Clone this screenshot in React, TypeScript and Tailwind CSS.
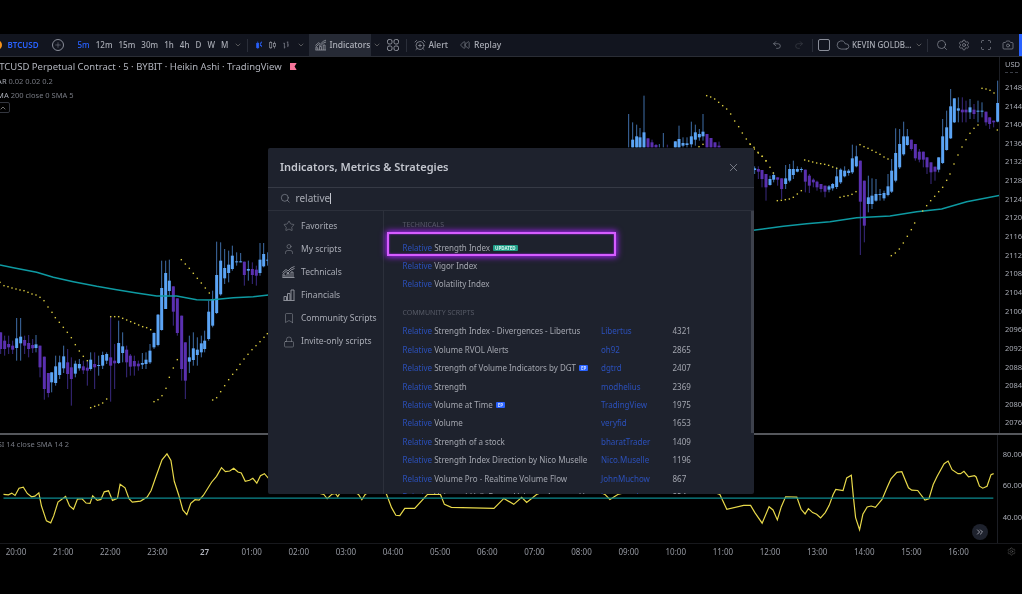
import React from "react";
import { AlarmClockPlus, Bookmark, Camera, ChevronDown, ChevronUp, ChevronsRight, Cloud, Lock, Plus, Redo2, Rewind, Scan, Search, Settings, Star, Undo2, User, X } from "lucide-react";

type C = [number, number, number, number, number, number];
// x, bodyTop, bodyBottom, wickTop, wickBottom, up(1)/down(0), crop coordinates
const leftC: C[] = [
[2,310,360,310,375,0],[14,335,360,320,380,0],[26,345,355,320,375,0],[38,350,362,335,375,0],[50,328,357,267,395,1],[62,323,343,267,395,1],[74,333,350,320,375,0],[86,342,360,318,385,0],[98,348,358,330,372,0],[108,346,357,318,370,1],[120,350,415,350,445,0],[133,383,480,383,512,0],[145,432,492,432,505,0],[155,430,460,430,490,1],[167,412,462,380,470,1],[179,400,438,380,450,1],[191,382,418,350,432,1],[203,400,435,360,480,0],[214,415,450,385,530,0],[226,404,434,395,445,1],[238,405,418,390,425,1],[250,412,424,395,435,0],[262,416,425,395,470,0],[272,392,420,370,425,1],[284,405,415,370,480,0],[296,408,411,380,440,1],[308,378,410,368,420,1],[320,375,395,370,405,1],[332,385,410,262,518,0],[344,395,403,345,480,0],[356,342,402,275,405,1],[368,352,372,310,400,1],[380,362,400,350,445,0],[391,380,413,375,440,0],[403,396,412,380,440,0],[415,404,412,395,425,0],[427,402,407,372,420,1],[438,392,405,370,420,1],[450,365,400,345,405,1],[462,312,355,310,360,1],[474,257,348,255,352,1],[485,177,303,95,305,1],[497,132,240,95,240,1],[508,155,186,92,200,1],[520,172,248,172,290,0],[532,208,312,208,320,0],[545,260,420,260,455,0],[556,340,455,340,510,0],[568,385,398,320,432,1],[580,358,393,310,410,1],[592,362,378,325,410,1],[604,343,370,320,385,1],[614,335,360,305,370,1],[626,248,330,215,335,1],[638,210,290,185,295,1],[650,138,252,38,255,1],[662,95,196,40,200,1],[674,117,148,60,165,1],[686,107,132,65,160,1],[697,80,120,50,125,1],[710,97,100,70,110,1],[722,97,100,72,100,1],[733,98,138,98,170,0],[745,120,125,95,155,1],[757,120,138,100,165,0],[769,122,140,110,170,0],[780,92,132,42,140,1],[791,75,112,42,115,1],[803,92,95,70,110,1],
];
const rightC: C[] = [
[14,268,273,262,285,1],[25,270,278,262,300,0],[36,273,300,273,325,0],[48,285,325,285,365,0],[60,300,318,290,320,1],[71,288,302,280,310,1],[83,295,302,295,320,0],[95,298,330,298,360,0],[107,298,315,258,330,1],[119,270,305,255,310,1],[130,270,288,245,300,1],[142,270,278,262,280,1],[154,270,273,265,280,1],[166,272,308,272,340,0],[178,290,320,285,342,0],[190,302,310,298,325,0],[201,308,325,305,335,0],[213,315,330,315,340,0],[225,320,338,320,355,0],[237,322,332,318,340,1],[248,315,328,312,335,1],[260,292,324,265,330,1],[272,272,310,268,315,1],[284,275,292,262,295,1],[296,275,282,270,290,1],[307,238,280,197,285,1],[319,232,262,200,265,1],[331,245,368,245,528,0],[343,305,440,305,490,0],[355,355,375,290,400,1],[366,350,375,298,390,1],[378,345,365,300,368,1],[390,345,348,330,365,1],[402,342,358,335,365,1],[414,322,348,285,352,1],[425,275,338,240,342,1],[437,222,305,148,310,1],[449,195,265,150,270,1],[461,172,226,128,230,1],[472,172,198,150,200,1],[484,182,210,182,215,0],[496,195,238,195,245,0],[508,218,242,210,250,0],[520,218,242,218,265,0],[531,235,265,235,285,0],[543,250,280,250,315,0],[555,263,278,263,305,0],[566,235,272,235,280,1],[578,172,252,120,255,1],[590,145,213,95,215,1],[602,82,178,30,180,1],[613,58,130,58,132,1],[625,88,95,55,130,1],[637,92,100,55,130,0],[648,92,100,65,130,0],[660,85,100,60,120,1],[672,92,105,75,120,0],[684,95,98,65,130,1],[696,95,98,70,115,1],[708,98,130,98,140,0],[719,115,135,115,150,0],[731,125,130,125,145,0],[743,72,128,5,130,1],
];
const topC: C[] = [
[206,205,205,105,205,1],[218,182,205,130,205,1],[230,172,205,137,205,1],[240,175,205,147,205,1],[252,160,205,50,205,1],[264,178,205,178,205,0],[276,190,205,182,205,0],[288,198,205,195,205,0],[298,205,205,195,205,1],[310,205,205,162,205,1],[322,205,205,197,205,0],[346,187,205,187,205,1],[357,180,205,140,205,1],[369,192,200,175,205,1],[381,193,198,175,205,1],[394,172,196,128,205,1],[406,160,182,137,200,1],[418,165,175,150,185,1],[429,158,172,105,185,1],[441,165,205,165,205,0],[453,177,205,177,205,0],[465,190,205,190,205,0],[477,200,205,188,205,0],
];
const candles = [
  ...leftC.map((c) => ({ c, ox: 0, oy: 230 })),
  ...rightC.map((c) => ({ c, ox: 750, oy: 80 })),
  ...topC.map((c) => ({ c, ox: 560, oy: 80 })),
];

const dotsL = [[0,160],[12,170],[24,173],[36,177],[48,180],[60,183],[72,185],[84,190],[96,195],[108,198],[120,205],[132,215],[144,234],[156,250],[166,266],[178,280],[190,295],[202,310],[214,326],[226,347],[238,366],[250,382],[262,395],[272,536],[284,532],[296,528],[308,522],[320,510],[332,263],[344,263],[356,263],[368,268],[380,273],[392,278],[404,283],[416,288],[428,293],[440,296],[452,302],[462,518],[474,512],[486,500],[498,478],[508,445],[520,417],[532,392],[544,92],[556,105],[568,118],[580,133],[592,148],[604,162],[616,177],[628,192],[638,513],[650,506],[662,488],[674,470],[686,452],[698,436],[710,422],[720,406],[732,390],[744,376],[756,362],[768,350],[780,338],[792,325],[802,314]];
const dotsR = [[0,195],[12,205],[24,220],[36,232],[48,245],[60,265],[70,282],[82,365],[94,364],[106,362],[118,360],[130,355],[142,345],[154,335],[164,243],[176,246],[188,249],[200,252],[212,254],[224,256],[236,259],[248,264],[260,268],[270,355],[282,352],[294,350],[306,346],[318,338],[330,197],[342,203],[354,208],[366,214],[378,220],[390,226],[402,234],[414,240],[424,530],[436,522],[448,510],[460,492],[472,472],[484,452],[494,432],[518,396],[530,380],[542,365],[554,352],[566,338],[578,325],[590,304],[600,285],[612,255],[624,228],[636,204],[648,182],[660,163],[672,148],[684,138],[696,28],[708,30],[720,34],[732,42],[742,153]];
const dotsT = [[417,203],[429,196],[440,50],[452,54],[464,60],[476,70],[488,80],[500,90],[512,105],[524,126],[536,143],[547,162],[559,180],[571,196],[583,210],[595,222],[607,232],[618,246]];
const dots = [
  ...dotsL.map(([x, y]) => [x / 3, 230 + y / 3]),
  ...dotsR.map(([x, y]) => [750 + x / 3, 80 + y / 3]),
  ...dotsT.map(([x, y]) => [560 + x / 3, 80 + y / 3]),
];

const maL = [[0,108],[40,116],[110,130],[160,145],[220,158],[290,172],[350,182],[410,192],[470,201],[530,201],[590,212],[630,213],[700,206],[760,203],[805,198]];
const maR = [[10,454],[100,442],[170,434],[240,428],[320,416],[420,411],[500,398],[575,390],[650,368],[748,349]];
const ma = [...maL.map(([x, y]) => `${x / 3},${230 + y / 3}`), ...maR.map(([x, y]) => `${750 + x / 3},${80 + y / 3}`)].join(" ");

const rsi1 = [[0,225],[15,226],[25,221],[35,228],[47,206],[60,203],[72,222],[85,232],[95,230],[107,220],[115,260],[130,305],[143,311],[152,290],[165,248],[188,231],[200,260],[212,270],[224,239],[238,238],[250,251],[262,252],[270,229],[284,243],[295,240],[305,217],[318,214],[330,243],[345,237],[353,194],[368,205],[380,238],[390,248],[415,245],[435,233],[447,213],[462,170],[480,120],[495,102],[507,122],[517,185],[530,225],[543,272],[555,286],[567,252],[580,241],[592,242],[605,228],[630,188],[645,170],[660,144],[672,156],[685,154],[697,146],[710,157],[720,160],[732,185],[745,182],[755,176],[767,191],[778,168],[790,162],[803,177],[830,190],[970,225],[980,238],[995,224],[1005,222],[1012,232],[1020,218],[1050,210],[1075,225],[1085,241],[1095,225],[1130,200],[1150,210],[1160,225],[1175,265],[1188,288],[1200,289]];
const rsiMid = [[405,509],[415,509],[428,495],[441,495],[445,505],[452,508],[495,509],[505,499],[515,505],[523,498],[528,503],[538,495],[575,480],[607,495],[612,500],[620,495],[680,480],[723,495],[730,510],[747,506]];
const rsi2 = [[0,258],[12,258],[25,280],[47,312],[68,262],[80,272],[93,302],[105,262],[118,232],[152,233],[165,270],[177,284],[187,268],[200,280],[212,285],[224,296],[238,280],[250,258],[262,225],[270,210],[292,213],[303,175],[317,167],[323,230],[330,295],[342,332],[352,285],[365,263],[377,260],[390,264],[410,240],[425,205],[437,178],[455,158],[470,156],[490,205],[500,212],[518,213],[540,242],[552,238],[565,195],[577,170],[598,132],[610,124],[622,150],[640,162],[648,162],[658,155],[672,172],[690,168],[695,172],[705,200],[715,206],[728,200],[740,165],[748,162]];
const rsi = [...rsi1.map(([x, y]) => `${x / 3},${420 + y / 3}`), ...rsiMid.map(([x, y]) => `${x},${y}`), ...rsi2.map(([x, y]) => `${750 + x / 3},${420 + y / 3}`)].join(" ");

const prices = ["21480","21440","21400","21360","21320","21280","21240","21200","21160","21120","21080","21040","21000","20960","20920","20880","20840","20800","20760"];
const times = ["20:00","21:00","22:00","23:00","27","01:00","02:00","03:00","04:00","05:00","06:00","07:00","08:00","09:00","10:00","11:00","12:00","13:00","14:00","15:00","16:00"];
const tech = [
  { rest: "Strength Index", badge: true },
  { rest: "Vigor Index", badge: false },
  { rest: "Volatility Index", badge: false },
];
const rows: [string, string, string, boolean][] = [
  ["Strength Index - Divergences - Libertus", "Libertus", "4321", false],
  ["Volume RVOL Alerts", "oh92", "2865", false],
  ["Strength of Volume Indicators by DGT", "dgtrd", "2407", true],
  ["Strength", "modhelius", "2369", false],
  ["Volume at Time", "TradingView", "1975", true],
  ["Volume", "veryfid", "1653", false],
  ["Strength of a stock", "bharatTrader", "1409", false],
  ["Strength Index Direction by Nico Muselle", "Nico.Muselle", "1196", false],
  ["Volume Pro - Realtime Volume Flow", "JohnMuchow", "867", false],
  ["Volume (rVol), Better Volume, Average V...", "kurtsmock", "824", false],
];

function Chart() {
  return (
    <svg viewBox="0 58 999 376" className="absolute inset-0 h-full w-full">
      {candles.map(({ c, ox, oy }, i) => {
        const [x, bt, bb, wt, wb, up] = c;
        const px = ox + x / 3;
        const top = oy + bt / 3;
        const h = (bb - bt) / 3;
        return (
          <g key={i}>
            <line x1={px} x2={px} y1={oy + wt / 3} y2={oy + wb / 3} stroke={up ? "#3f6ea8" : "#3a2a80"} strokeWidth="1" />
            {h > 0 && <rect x={px - 1.5} y={top} width="3" height={Math.max(h, 1)} fill={up ? "#5ba4f5" : "#5a30b0"} />}
          </g>
        );
      })}
      <polyline points={ma} fill="none" stroke="#0e9aa2" strokeWidth="1.5" />
      {dots.map(([x, y], i) => (
        <rect key={i} x={x - 0.7} y={y - 0.7} width="1.4" height="1.4" fill="#d8c93f" />
      ))}
    </svg>
  );
}

function RsiChart() {
  return (
    <svg viewBox="0 435 999 109" className="absolute inset-0 h-full w-full">
      <polyline points={rsi} fill="none" stroke="#e8d94a" strokeWidth="1.2" />
      <line x1="0" x2="999" y1="498.7" y2="498.7" stroke="#0d8a8f" strokeWidth="1.3" />
    </svg>
  );
}

function CandleIcon({ color }: { color: string }) {
  return (
    <svg width="10" height="12" viewBox="0 0 10 12" fill="none" stroke={color} strokeWidth="1">
      <rect x="1" y="3.5" width="3" height="6.5" fill={color === "#2962ff" ? color : "none"} />
      <path d="M2.5 1v2.5M2.5 10v1.5M8 1v2M8 7v2" />
      <rect x="6.5" y="3" width="3" height="4" />
    </svg>
  );
}
function BarsIcon() {
  return (
    <svg width="9" height="12" viewBox="0 0 9 12" fill="none" stroke="#8a8e99" strokeWidth="1">
      <path d="M2 3v8M2 3.5H.5M2 9h1.5M7 1v8M7 2H5.5M7 6h1.5" />
    </svg>
  );
}
function HollowIcon() {
  return (
    <svg width="10" height="12" viewBox="0 0 10 12" fill="none" stroke="#9598a1" strokeWidth="1">
      <rect x="1" y="2.5" width="3" height="7.5" />
      <path d="M2.5 .5v2M2.5 10v1.5M8 1v3M8 8v3" />
      <rect x="6.5" y="4" width="3" height="4" />
    </svg>
  );
}
function ChartBarsIcon({ color = "#9598a1" }: { color?: string }) {
  return (
    <svg width="13" height="12" viewBox="0 0 13 12" fill="none" stroke={color} strokeWidth="0.9">
      <path d="M.5 6.5 4 3.5l2 1.5L9 2l3.5-1.5M.5 8.5 4 5.5l2 1.5L9 4l3.5-1.5" />
      <path d="M1 11.5V9h2v2.5M5 11.5V7.5h2v4M9 11.5V6h2v5.5M.5 11.5h12" />
    </svg>
  );
}
function GridIcon() {
  return (
    <svg width="12" height="12" viewBox="0 0 12 12" fill="none" stroke="#8f929c" strokeWidth="1">
      <rect x=".5" y=".5" width="4.5" height="4.5" rx="1.6" />
      <rect x="7" y=".5" width="4.5" height="4.5" rx="1.6" />
      <rect x=".5" y="7" width="4.5" height="4.5" rx="1.6" />
      <rect x="7" y="7" width="4.5" height="4.5" rx="1.6" />
    </svg>
  );
}
function FinancialsIcon() {
  return (
    <svg width="12" height="12" viewBox="0 0 12 12" fill="none" stroke="#9598a1" strokeWidth="0.9">
      <path d="M.5 11.5h11M1 11.5V7.5h2.5v4M4.5 11.5v-7H7v7M8 11.5V1h3v10.5" />
    </svg>
  );
}
function Divider() {
  return <span className="h-[13px] w-px shrink-0 bg-[#2a2e39]" />;
}
function Rel({ children }: { children: React.ReactNode }) {
  return (
    <>
      <span className="text-[#2b50bb]">Relative</span> <span className="text-[#a3a6af]">{children}</span>
    </>
  );
}

export default function App() {
  return (
    <div className="relative flex h-[594px] w-[1022px] flex-col overflow-hidden bg-black pt-[34px] font-['Noto_Sans',sans-serif] text-[#a8abb4] blur-[0.3px]">
      {/* toolbar */}
      <header className="flex h-[23px] shrink-0 items-center border-b border-[#2a2d35] bg-[#12151f] text-[8px] leading-none font-medium">
        <span className="-ml-[3px] h-[10px] w-[5px] shrink-0 rounded-r-full bg-[#f7931a]" />
        <span className="ml-[5.5px] w-[36px] font-semibold text-[#2962ff]">BTCUSD</span>
        <Plus className="ml-[8px] box-content size-[8px] rounded-full border border-[#8a8e99] p-px text-[#8a8e99]" strokeWidth={1.5} />
        <span className="ml-[8px]"><Divider /></span>
        <nav className="ml-[6px] flex w-[151px] justify-between">
          <span className="text-[#2962ff]">5m</span>
          <span>12m</span><span>15m</span><span>30m</span><span>1h</span><span>4h</span><span>D</span><span>W</span><span>M</span>
        </nav>
        <ChevronDown className="ml-[5px] size-[8px] text-[#777]" />
        <span className="ml-[5px] flex"><Divider /></span>
        <span className="ml-[8px] flex w-[50px] items-center gap-[7px]">
          <CandleIcon color="#2962ff" />
          <HollowIcon />
          <BarsIcon />
          <ChevronDown className="ml-[1px] size-[8px] shrink-0 text-[#777]" />
        </span>
        <button className="ml-[3px] flex h-full w-[62px] items-center gap-[3px] bg-[#262a35] pl-[6px] text-[8.5px] text-[#aeb1ba]">
          <ChartBarsIcon />
          Indicators
        </button>
        <ChevronDown className="ml-[2px] size-[8px] text-[#777]" />
        <span className="ml-[6px]"><GridIcon /></span>
        <span className="ml-[7px] flex"><Divider /></span>
        <AlarmClockPlus className="ml-[7px] size-[12px] text-[#9598a1]" strokeWidth={1.5} />
        <span className="ml-[3px] text-[8.5px]">Alert</span>
        <Rewind className="ml-[12px] size-[10px] text-[#8a8e99]" strokeWidth={1.5} />
        <span className="ml-[4px] text-[8.5px]">Replay</span>
        <span className="flex-1" />
        <Undo2 className="size-[10px] text-[#8a8e99]" strokeWidth={1.5} />
        <Redo2 className="ml-[12px] size-[10px] text-[#3e414a]" strokeWidth={1.5} />
        <span className="ml-[8px] flex"><Divider /></span>
        <span className="ml-[5px] size-[12px] rounded-[2px] border border-[#8a8e99]" />
        <Cloud className="ml-[6px] size-[14px] text-[#8a8e99]" strokeWidth={1.2} />
        <span className="ml-[2px] w-[56px] whitespace-nowrap text-[8px] text-[#a8abb4]">KEVIN GOLDB...</span>
        <ChevronDown className="ml-[7px] size-[8px] text-[#777]" />
        <span className="ml-[4px] flex"><Divider /></span>
        <Search className="ml-[8px] size-[12px] text-[#9598a1]" strokeWidth={1.3} />
        <Settings className="ml-[10px] size-[12px] text-[#9598a1]" strokeWidth={1.3} />
        <Scan className="ml-[10px] size-[12px] text-[#9598a1]" strokeWidth={1.3} />
        <Camera className="ml-[10px] size-[12px] text-[#9598a1]" strokeWidth={1.3} />
        <span className="ml-[5px] h-full w-[3px] bg-[#2962ff]" />
      </header>

      {/* main chart */}
      <section className="flex h-[376px] shrink-0">
        <div className="relative w-[999px] overflow-hidden">
          <Chart />
          <div className="relative -ml-[7px] flex flex-col items-start pt-[4px]">
            <div className="flex h-[11px] items-center whitespace-nowrap text-[9.5px] leading-none text-[#b2b5be]">
              BTCUSD Perpetual Contract · 5 · BYBIT · Heikin Ashi · TradingView
              <span className="ml-[8px] h-[7px] w-[7px] bg-[#f7749a] [clip-path:polygon(0_0,100%_0,70%_50%,100%_100%,0_100%)]" />
            </div>
            <div className="mt-[4px] h-[10px] whitespace-nowrap text-[7.5px] leading-[10px] text-[#777a83]"><span className="text-[#a8abb4]">SAR</span> 0.02 0.02 0.2</div>
            <div className="mt-[4px] h-[10px] whitespace-nowrap text-[7.5px] leading-[10px] text-[#777a83]"><span className="text-[#a8abb4]">SMA</span> 200 close 0 SMA 5</div>
            <button className="mt-[2px] ml-[3px] flex h-[11px] w-[14px] items-center justify-center rounded-[2px] border border-[#33363f] text-[#aaa]">
              <ChevronUp className="size-[8px]" />
            </button>
          </div>
        </div>
        <aside className="flex flex-1 flex-col overflow-hidden border-l border-[#1c1e24] pl-[5px] text-[7.5px] leading-none whitespace-nowrap text-[#a8abb4]">
          <div className="flex h-[21.35px] shrink-0 flex-col pt-[4px]">
            <span>USD ▾</span>
            <span className="mt-[3px] w-[13px] border-b border-dashed border-[#3a3d45]" />
          </div>
          {prices.map((p) => (
            <div key={p} className="flex h-[18.65px] shrink-0 items-center">{p}</div>
          ))}
        </aside>
      </section>

      <div className="h-[1.5px] shrink-0 bg-[#55575c]" />

      {/* RSI pane */}
      <section className="flex h-[109px] shrink-0 border-b border-[#17181c]">
        <div className="relative w-[999px] overflow-hidden">
          <RsiChart />
          <div className="relative -ml-[7px] pt-[4px] text-[7.5px] leading-[10px] whitespace-nowrap text-[#777a83]">RSI 14 close SMA 14 2</div>
          <button className="absolute top-[89px] right-[9px] flex size-[16px] items-center justify-center rounded-full bg-[#1e222d] text-[#b2b5be]">
            <ChevronsRight className="size-[10px]" />
          </button>
        </div>
        <aside className="flex flex-1 flex-col gap-[15.8px] border-l border-[#1c1e24] pt-[11px] pl-[5px] text-[7.5px] leading-[16px] whitespace-nowrap text-[#a8abb4]">
          <span className="h-[16px]">80.00</span>
          <span className="h-[16px]">60.00</span>
          <span className="h-[16px]">40.00</span>
        </aside>
      </section>

      {/* time axis */}
      <footer className="flex h-[16px] shrink-0 items-center">
        <div className="-ml-[7.56px] flex w-[1006.56px] items-center text-[8px] leading-none text-[#9598a1]">
          {times.map((t) => (
            <span key={t} className={`w-[47.13px] shrink-0 text-center ${t === "27" ? "font-semibold text-[#b2b5be]" : ""}`}>{t}</span>
          ))}
        </div>
        <Settings className="ml-[8px] size-[9px] text-[#666]" strokeWidth={1.3} />
      </footer>

      {/* dialog */}
      <div className="absolute top-[148px] left-[268px] flex h-[346px] w-[485.5px] flex-col overflow-hidden rounded-[2px] bg-[#1e222d]">
        <div className="flex h-[39.5px] shrink-0 items-center justify-between border-b border-[#363a45] pr-[14px] pl-[12px]">
          <h2 className="text-[11px] font-semibold text-[#c3c6ce]">Indicators, Metrics &amp; Strategies</h2>
          <X className="size-[13px] text-[#9a9da6]" strokeWidth={1.3} />
        </div>
        <div className="flex h-[23px] shrink-0 items-center gap-[5px] border-b border-[#2c303b] pl-[12px]">
          <Search className="size-[10.5px] text-[#8a8e99]" strokeWidth={1.5} />
          <span className="border-r border-[#c3c6ce] text-[10px] leading-[11px] text-[#a8abb4]">relative</span>
        </div>
        <div className="flex min-h-0 flex-1">
          <nav className="flex w-[116px] shrink-0 flex-col border-r border-[#2c303b] pt-[4px] pl-[14px] text-[8.5px] text-[#a8abb4]">
            {[
              [<Star key="i" className="size-[12px] text-[#9598a1]" strokeWidth={1} />, "Favorites"],
              [<User key="i" className="size-[12px] text-[#9598a1]" strokeWidth={1} />, "My scripts"],
              [<ChartBarsIcon key="i" />, "Technicals"],
              [<FinancialsIcon key="i" />, "Financials"],
              [<Bookmark key="i" className="size-[12px] text-[#9598a1]" strokeWidth={1} />, "Community Scripts"],
              [<Lock key="i" className="size-[12px] text-[#9598a1]" strokeWidth={1} />, "Invite-only scripts"],
            ].map(([icon, label], i) => (
              <div key={i} className="flex h-[23.1px] items-center gap-[6px]">
                <span className="flex w-[13px] justify-center">{icon}</span>
                {label}
              </div>
            ))}
          </nav>
          <div className="relative min-w-0 flex-1 pl-[18.5px] text-[8px] whitespace-nowrap">
            <div className="flex h-[28px] items-center pt-[1px] text-[7px] text-[#565a66]">TECHNICALS</div>
            {tech.map((t, i) => (
              <div key={i} className="flex h-[18.4px] items-center gap-[2px]">
                <span><Rel>{t.rest}</Rel></span>
                {t.badge && <span className="ml-[1px] rounded-[1px] bg-[#1f9d87] px-[2px] text-[4.5px] leading-[6px] font-bold text-[#d5f5ee]">UPDATED</span>}
              </div>
            ))}
            <div className="flex h-[23px] items-end text-[7px] leading-[9px] text-[#565a66]">COMMUNITY SCRIPTS</div>
            <div className="mt-[5.5px]">
              {rows.map(([name, author, n, ep]) => (
                <div key={author} className="flex h-[18.42px] items-center">
                  <span className="flex w-[198.5px] items-center gap-[3px]">
                    <span><Rel>{name}</Rel></span>
                    {ep && <span className="rounded-[1px] bg-[#2962ff] px-[2px] text-[4.5px] leading-[6px] font-bold text-[#cfdcff]">EP</span>}
                  </span>
                  <span className="w-[71.5px] text-[#2b50bb]">{author}</span>
                  <span className="text-[#a3a6af]">{n}</span>
                </div>
              ))}
            </div>
            <span className="absolute top-0 right-0 h-[222px] w-[2.5px] bg-[#3d414c]" />
            {/* highlight frame */}
            <span className="absolute top-[21px] left-[3px] h-[24px] w-[228.5px] border-2 border-[#d65cff] shadow-[0_0_6px_1px_#a820ff,inset_0_0_2px_#a820ff]" />
          </div>
        </div>
      </div>
    </div>
  );
}
